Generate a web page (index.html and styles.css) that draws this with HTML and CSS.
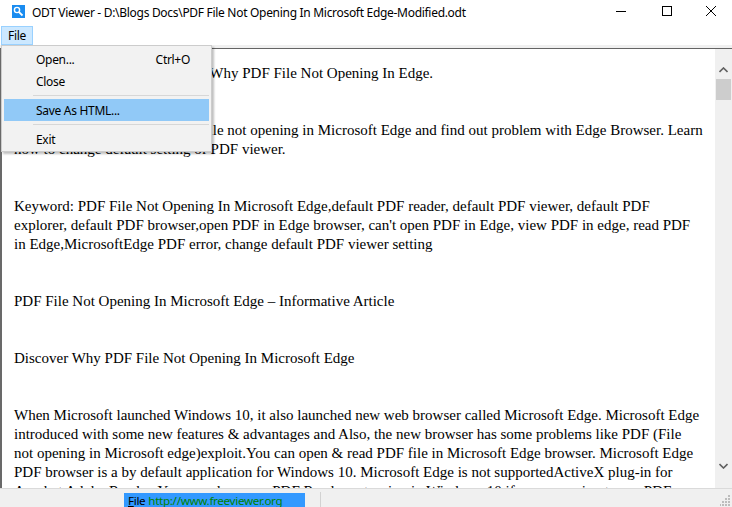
FILE: index.html
```html
<!DOCTYPE html>
<html>
    <head>
        <meta charset="utf-8">
        <title>ODT Viewer</title>

        <link rel="stylesheet" href="styles.css">
    </head>

    <body>

        <div class="window">
            <!-- title bar -->
            <header class="title-bar">
                <span class="app-icon">
                    <svg width="13" height="13" viewBox="0 0 13 13">
                        <rect width="13" height="13" fill="#1a8cf0"/>
                        <circle cx="5" cy="5" r="2.6" fill="none" stroke="#fff" stroke-width="1.4"/>
                        <path d="M6.8 6.8 L10.5 10.5" stroke="#fff" stroke-width="1.8"/>
                    </svg>
                </span>
                <span class="title-text">ODT Viewer - D:\Blogs Docs\PDF File Not Opening In Microsoft Edge-Modified.odt</span>
                <div class="window-controls">
                    <span class="ctl">
                        <svg width="10" height="10" viewBox="0 0 10 10"><path d="M0 5.5 H10" stroke="#000" stroke-width="1"/></svg>
                    </span>
                    <span class="ctl">
                        <svg width="10" height="10" viewBox="0 0 10 10"><rect x="0.5" y="0.5" width="9" height="9" fill="none" stroke="#000" stroke-width="1"/></svg>
                    </span>
                    <span class="ctl">
                        <svg width="10" height="10" viewBox="0 0 10 10"><path d="M0 0 L10 10 M10 0 L0 10" stroke="#000" stroke-width="1"/></svg>
                    </span>
                </div>
            </header>

            <!-- menu bar -->
            <nav class="menu-bar">
                <span class="menu-item active">File</span>
            </nav>

            <div class="main">
                <div class="document">
                    <p>Title: To Find Out and Discover Why PDF File Not Opening In Edge.</p>

                    <p>Description: Know why a PDF file not opening in Microsoft Edge and find out problem with Edge Browser. Learn<br>
                    how to change default setting of PDF viewer.</p>

                    <p>Keyword: PDF File Not Opening In Microsoft Edge,default PDF reader, default PDF viewer, default PDF<br>
                    explorer, default PDF browser,open PDF in Edge browser, can't open PDF in Edge, view PDF in edge, read PDF<br>
                    in Edge,MicrosoftEdge PDF error, change default PDF viewer setting</p>

                    <p>PDF File Not Opening In Microsoft Edge &ndash; Informative Article</p>

                    <p>Discover Why PDF File Not Opening In Microsoft Edge</p>

                    <p>When Microsoft launched Windows 10, it also launched new web browser called Microsoft Edge. Microsoft Edge<br>
                    introduced with some new features &amp; advantages and Also, the new browser has some problems like PDF (File<br>
                    not opening in Microsoft edge)exploit.You can open &amp; read PDF file in Microsoft Edge browser. Microsoft Edge<br>
                    PDF browser is a by default application for Windows 10. Microsoft Edge is not supportedActiveX plug-in for<br>
                    Acrobat Adobe Reader. You can also use a PDF Reader extension in Windows 10 if you are going to use PDF</p>
                </div>

                <div class="scrollbar">
                    <span class="arrow">
                        <svg width="9" height="6" viewBox="0 0 9 6"><path d="M0.5 5 L4.5 1 L8.5 5" fill="none" stroke="#606060" stroke-width="1.6"/></svg>
                    </span>
                    <div class="track">
                        <div class="thumb"></div>
                    </div>
                    <span class="arrow">
                        <svg width="9" height="6" viewBox="0 0 9 6"><path d="M0.5 1 L4.5 5 L8.5 1" fill="none" stroke="#606060" stroke-width="1.6"/></svg>
                    </span>
                </div>
            </div>

            <!-- status bar -->
            <footer class="status-bar">
                <div class="status-panel">
                    <span class="status-label"><u>F</u>ile</span>
                    <span class="status-link">http://www.freeviewer.org</span>
                </div>
                <span class="status-divider"></span>
                <span class="grip">
                    <svg width="11" height="11" viewBox="0 0 11 11" fill="#bdbdbd">
                        <rect x="8" y="0" width="2" height="2"/>
                        <rect x="5" y="3" width="2" height="2"/><rect x="8" y="3" width="2" height="2"/>
                        <rect x="2" y="6" width="2" height="2"/><rect x="5" y="6" width="2" height="2"/><rect x="8" y="6" width="2" height="2"/>
                        <rect x="-1" y="9" width="2" height="2"/><rect x="2" y="9" width="2" height="2"/><rect x="5" y="9" width="2" height="2"/><rect x="8" y="9" width="2" height="2"/>
                    </svg>
                </span>
            </footer>
        </div>

        <!-- opened File menu -->
        <div class="dropdown">
            <div class="dd-item"><span>Open...</span><span class="shortcut">Ctrl+O</span></div>
            <div class="dd-item"><span>Close</span></div>
            <div class="dd-sep"></div>
            <div class="dd-item selected"><span>Save As HTML...</span></div>
            <div class="dd-sep"></div>
            <div class="dd-item"><span>Exit</span></div>
        </div>

    </body>
</html>
```

FILE: styles.css
```css
/* ODT Viewer window */

html, body {
    margin: 0;
    padding: 0;
}

body {
    width: 732px;
    height: 507px;
    overflow: hidden;
    position: relative;
    background: #fff;
    font-family: "Noto Sans", "Open Sans", sans-serif;
    font-size: 12px;
    letter-spacing: -0.3px;
    color: #000;
}

.window {
    display: flex;
    flex-direction: column;
    height: 100%;
}

/* Title bar */

.title-bar {
    display: flex;
    align-items: center;
    height: 24px;
    padding-left: 12px;
    background: #fff;
}

.app-icon {
    display: flex;
    width: 13px;
    height: 13px;
    margin-top: -1px;
}

.title-text {
    margin-left: 7px;
    white-space: nowrap;
}

.window-controls {
    display: flex;
    margin-left: auto;
    height: 100%;
}

.ctl {
    display: flex;
    justify-content: center;
    align-items: center;
    width: 46px;
    margin-top: -2px;
}

.ctl:last-child {
    width: 42px;
}

/* Menu bar */

.menu-bar {
    display: flex;
    align-items: flex-start;
    height: 19px;
    padding: 2px 0 0 1px;
    border-bottom: 3px solid #f0f0f0;
}

.menu-item {
    padding: 0 6px;
    height: 17px;
    line-height: 17px;
    border: 1px solid transparent;
}

.menu-item.active {
    background: #cce8ff;
    border-color: #99d1ff;
}

/* Document */

.main {
    display: flex;
    flex: 1;
    min-height: 0;
    border-top: 1px solid #646464;
}

.document {
    flex: 1;
    overflow: hidden;
    border-left: 2px solid #696969;
    padding: 15px 0 0 12px;
    font-family: "Liberation Serif", "Times New Roman", serif;
    font-size: 15px;
    letter-spacing: 0;
    line-height: 19px;
    white-space: nowrap;
}

.document p {
    margin: 0 0 38px 0;
}

.scrollbar {
    display: flex;
    flex-direction: column;
    width: 17px;
    background: #f0f0f0;
}

.arrow {
    display: flex;
    justify-content: center;
    align-items: center;
    height: 17px;
}

.scrollbar .arrow:first-child {
    margin-top: 12px;
}

.scrollbar .arrow:last-child {
    margin-bottom: 14px;
}

.track {
    flex: 1;
    padding: 1px 1px 0 1px;
}

.thumb {
    height: 21px;
    background: #cdcdcd;
}

/* Status bar */

.status-bar {
    display: flex;
    align-items: flex-end;
    height: 18px;
    background: #f0f0f0;
    border-top: 1px solid #dadada;
}

.status-panel {
    display: flex;
    align-items: center;
    gap: 3px;
    margin-left: 124px;
    width: 177px;
    height: 14px;
    padding-left: 4px;
    background: #3399ff;
    font-size: 11.6px;
    white-space: nowrap;
}

.status-link {
    color: #008000;
}

.status-divider {
    width: 1px;
    height: 15px;
    margin-left: 15px;
    background: #d2d2d2;
}

.grip {
    display: flex;
    margin-left: auto;
    margin-right: 1px;
    margin-bottom: 1px;
}

/* File dropdown menu */

.dropdown {
    position: absolute;
    top: 45px;
    left: 1px;
    width: 205px;
    padding: 2px 2px 1px;
    background: #f2f2f2;
    border: 1px solid #cccccc;
    box-shadow: 2px 2px 2px rgba(0, 0, 0, 0.25);
}

.dd-item {
    display: flex;
    height: 22px;
    align-items: center;
    padding-left: 32px;
}

.dd-item .shortcut {
    margin-left: auto;
    margin-right: 19px;
}

.dd-item.selected {
    background: #91c9f7;
}

.dd-sep {
    height: 1px;
    margin: 3px 0 3px 29px;
    background: #d7d7d7;
}
```
